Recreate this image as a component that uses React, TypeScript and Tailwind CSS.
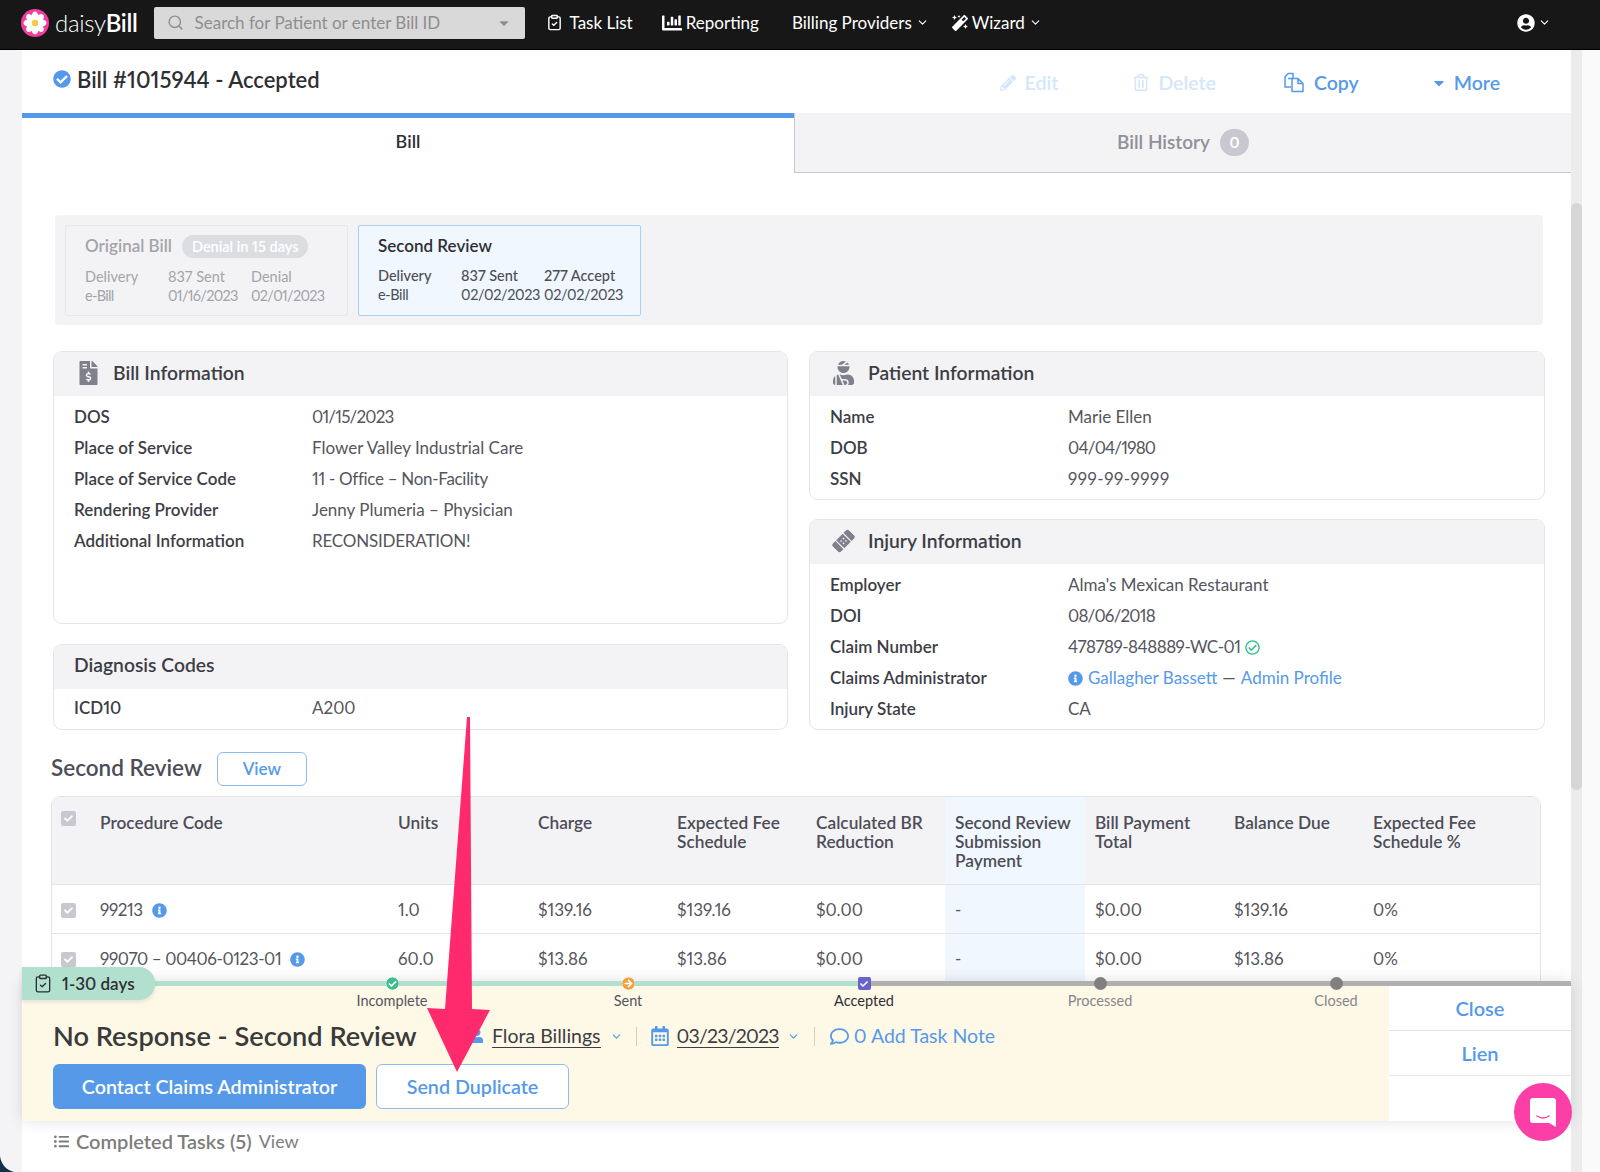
import { ChevronDown, ClipboardCheck, Search } from "lucide-react";
import {
  FaArrowCircleRight,
  FaBandAid,
  FaCaretDown,
  FaChartBar,
  FaCheck,
  FaCheckCircle,
  FaFileInvoiceDollar,
  FaInfoCircle,
  FaListUl,
  FaMagic,
  FaPencilAlt,
  FaRegCalendarAlt,
  FaRegCheckCircle,
  FaRegComment,
  FaRegTrashAlt,
  FaUser,
  FaUserCircle,
  FaUserInjured,
} from "react-icons/fa";

const gridCols = "grid grid-cols-[38px_298px_140px_139px_139px_139px_140px_139px_139px_177px]";
const tightDigits = "tracking-[-0.8px]";

const billRows = [
  ["DOS", "01/15/2023", tightDigits],
  ["Place of Service", "Flower Valley Industrial Care", ""],
  ["Place of Service Code", "11 - Office – Non-Facility", "tracking-[-0.3px]"],
  ["Rendering Provider", "Jenny Plumeria – Physician", ""],
  ["Additional Information", "RECONSIDERATION!", "tracking-[-0.2px]"],
];

const patientRows = [
  ["Name", "Marie Ellen", ""],
  ["DOB", "04/04/1980", tightDigits],
  ["SSN", "999-99-9999", "tracking-[0.5px]"],
];

function Logo() {
  const petals = [0, 45, 90, 135, 180, 225, 270, 315];
  return (
    <svg width="28" height="28" viewBox="0 0 28 28" className="shrink-0">
      <circle cx="14" cy="14" r="14" fill="#f23d9c" />
      {petals.map((a) => (
        <ellipse key={a} cx="14" cy="7.5" rx="3.4" ry="5" fill="#fff" transform={`rotate(${a} 14 14)`} />
      ))}
      <circle cx="14" cy="14" r="3.2" fill="#f7c948" />
    </svg>
  );
}

function CopyIcon() {
  return (
    <svg width="21" height="21" viewBox="0 0 21 21" fill="none" stroke="currentColor" strokeWidth="1.5" strokeLinejoin="round">
      <path d="M4 1.5h5l0 5h-0M9 1.5v5H4M4 1.5 1 5v10h6" />
      <path d="M8 6.5h6v5h5v8H8zM14 6.5l5 5" />
    </svg>
  );
}

function NavBar() {
  return (
    <div className="flex h-[50px] items-center border-b border-black bg-[#171717] pb-[4px] pl-[21px] text-[17px] text-white">
      <Logo />
      <span className="ml-[6px] text-[24px] font-light tracking-[-0.3px]">
        daisy<span className="font-semibold">Bill</span>
      </span>
      <div className="ml-[16px] flex h-[32px] w-[371px] shrink-0 items-center rounded-[2px] bg-[#d9d9d9] pl-[13px] pr-[14px] text-[#8e8e8e]">
        <Search className="h-[17px] w-[17px]" strokeWidth={2} />
        <span className="ml-[11px] flex-1 text-[17px]">Search for Patient or enter Bill ID</span>
        <FaCaretDown className="h-[14px] w-[14px]" />
      </div>
      <ClipboardCheck className="ml-[21px] h-[17px] w-[17px]" strokeWidth={2} />
      <span className="ml-[7px]">Task List</span>
      <FaChartBar className="ml-[29px] h-[20px] w-[20px]" />
      <span className="ml-[4px]">Reporting</span>
      <span className="ml-[33px]">Billing Providers</span>
      <ChevronDown className="ml-[4px] h-[13px] w-[13px]" />
      <FaMagic className="ml-[23px] h-[16px] w-[16px]" />
      <span className="ml-[4px]">Wizard</span>
      <ChevronDown className="ml-[4px] h-[13px] w-[13px]" />
      <div className="ml-auto mr-[49px] flex items-center">
        <FaUserCircle className="h-[18px] w-[18px]" />
        <ChevronDown className="ml-[3px] h-[13px] w-[13px]" />
      </div>
    </div>
  );
}

function ActionBar() {
  return (
    <div className="flex h-[63px] items-start">
      <FaCheckCircle className="ml-[31px] mt-[20px] h-[18px] w-[18px] text-[#5599ea]" />
      <h1 className="ml-[6px] mt-[13px] text-[22px] font-semibold text-[#2f2f33]">Bill #1015944 - Accepted</h1>
      <div className="ml-auto mt-[18px] flex items-center text-[19.5px] font-semibold text-[#5599ea]">
        <span className="flex items-center text-[#d5e6fb]">
          <FaPencilAlt className="h-[16px] w-[16px]" />
          <span className="ml-[9px]">Edit</span>
        </span>
        <span className="ml-[75px] flex items-center text-[#d5e6fb]">
          <FaRegTrashAlt className="h-[17px] w-[16px]" />
          <span className="ml-[9px]">Delete</span>
        </span>
        <span className="ml-[68px] flex items-center">
          <CopyIcon />
          <span className="ml-[9px]">Copy</span>
        </span>
        <span className="ml-[72px] mr-[71px] flex items-center">
          <FaCaretDown className="h-[16px] w-[16px]" />
          <span className="ml-[7px]">More</span>
        </span>
      </div>
    </div>
  );
}

function Tabs() {
  return (
    <div className="flex h-[60px] text-[19px]">
      <div className="flex w-[772px] items-center justify-center border-t-[5px] border-[#5599ea] pb-[9px] text-[18px] font-semibold text-[#2f2f33]">
        Bill
      </div>
      <div className="flex flex-1 items-center justify-center border-b border-l border-[#c8c9ce] bg-[#f3f3f5] font-semibold text-[#8f9099]">
        Bill History
        <span className="ml-[10px] flex h-[27px] w-[29px] items-center justify-center rounded-full bg-[#c8c9d0] text-[15px] font-bold text-white">
          0
        </span>
      </div>
    </div>
  );
}

function BillVersion({ title, badge, cols, active }: { title: string; badge?: string; cols: string[][]; active?: boolean }) {
  const box = active
    ? "border-[#a9d0f7] bg-[#f0f7fe] text-[#4d4d57]"
    : "border-[#e7e8ea] bg-[#f3f3f5] text-[#a3a4ab]";
  return (
    <div className={`h-[91px] w-[283px] rounded-[2px] border pl-[19px] pt-[8px] ${box}`}>
      <div className="flex h-[24px] items-center text-[17px] font-semibold">
        <span className={active ? "text-[#2f2f33]" : ""}>{title}</span>
        {badge && <span className="ml-[10px] rounded-full bg-[#dcdde1] px-[10px] text-[14.5px] leading-[23px] text-white">{badge}</span>}
      </div>
      <div className={`${active ? "mt-[8px]" : "mt-[9px]"} flex text-[14.5px] leading-[19px]`}>
        {cols.map((c) => (
          <div key={c[0]} className="w-[83px] whitespace-nowrap">
            <div className={active ? "font-medium" : ""}>{c[0]}</div>
            <div className={active ? "tracking-[-0.4px]" : "tracking-[-0.7px]"}>{c[1]}</div>
          </div>
        ))}
      </div>
    </div>
  );
}

function InfoCard({ icon, title, children, className = "", tight }: { icon?: React.ReactNode; title: string; children: React.ReactNode; className?: string; tight?: boolean }) {
  return (
    <div className={`overflow-hidden rounded-[9px] border border-[#e4e5e8] ${className}`}>
      <div className={`flex h-[44px] items-center bg-[#f3f3f5] pl-[20px] text-[19.3px] font-semibold text-[#3d3d45] ${tight ? "pb-[3px]" : "pb-[2px]"}`}>
        {icon}
        {title}
      </div>
      <div className={tight ? "pt-[3.5px]" : "pt-[5.5px]"}>{children}</div>
    </div>
  );
}

function InfoRow({ label, children }: { label: string; children: React.ReactNode }) {
  return (
    <div className="flex h-[31px] items-center pl-[20px] text-[17px] text-[#55555d]">
      <span className="w-[238px] font-semibold text-[#3d3d45]">{label}</span>
      <span className="flex items-center">{children}</span>
    </div>
  );
}

function Check() {
  return (
    <span className="flex h-[15px] w-[15px] items-center justify-center rounded-[2px] bg-[#c8c9d0]">
      <FaCheck className="h-[9px] w-[9px] text-white" />
    </span>
  );
}

function FeeTable() {
  const head = [
    "Procedure Code",
    "Units",
    "Charge",
    "Expected Fee Schedule",
    "Calculated BR Reduction",
    "Second Review Submission Payment",
    "Bill Payment Total",
    "Balance Due",
    "Expected Fee Schedule %",
  ];
  const rows = [
    { code: "99213", vals: ["1.0", "$139.16", "$139.16", "$0.00", "-", "$0.00", "$139.16", "0%"] },
    { code: "99070 – 00406-0123-01", vals: ["60.0", "$13.86", "$13.86", "$0.00", "-", "$0.00", "$13.86", "0%"] },
  ];
  return (
    <div className="ml-[29px] mt-[10px] w-[1490px] overflow-hidden rounded-t-[9px] border border-b-0 border-[#e4e5e8]">
      <div className={`${gridCols} h-[88px] border-b border-[#e4e5e8] bg-[#f3f3f5] text-[17.3px] font-semibold leading-[19px] text-[#4d4d57]`}>
        <div className="pl-[9px] pt-[14px]"><Check /></div>
        {head.map((h, i) => (
          <div key={h} className={`pl-[10px] pr-[6px] pt-[16px] ${i === 5 ? "bg-[#f0f7fe]" : ""}`}>{h}</div>
        ))}
      </div>
      {rows.map((r) => (
        <div key={r.code} className={`${gridCols} h-[49px] border-b border-[#e4e5e8] text-[17px] text-[#55555d]`}>
          <div className="flex items-center pl-[9px] pt-[2px]"><Check /></div>
          <div className="flex items-center pl-[10px] pt-[2px] tracking-[-0.4px]">
            {r.code}
            <FaInfoCircle className="ml-[9px] h-[15px] w-[15px] text-[#5599ea]" />
          </div>
          {r.vals.map((v, i) => (
            <div key={i} className={`flex items-center pl-[10px] pt-[2px] ${i === 4 ? "bg-[#f0f7fe]" : ""}`}>{v}</div>
          ))}
        </div>
      ))}
    </div>
  );
}

function Step({ label, tone, children }: { label: string; tone: string; children: React.ReactNode }) {
  return (
    <div className="flex w-[236px] shrink-0 flex-col items-center">
      {children}
      <span className={`mt-[3px] text-[14.5px] leading-[16px] ${tone}`}>{label}</span>
    </div>
  );
}

function TaskBar() {
  return (
    <div className="absolute left-[22px] top-[981px] w-[1549px] text-[#3d3d45]">
      <div className="relative shadow-[0_0_14px_rgba(0,0,0,0.12)]">
        <div className="flex h-[5px]">
          <div className="w-[842px] bg-[#b2e0cf]" />
          <div className="flex-1 bg-[#b0b0b0]" />
        </div>
        <div className="absolute left-0 top-[-14px] flex h-[33px] w-[133px] items-center rounded-r-[16px] bg-[#b1e0cf] pl-[11px] text-[17px] font-semibold text-[#2f2f33] shadow-[0_2px_4px_rgba(0,0,0,0.1)]">
          <ClipboardCheck className="h-[23px] w-[20px]" strokeWidth={1.6} />
          <span className="ml-[9px]">1-30 days</span>
        </div>
        <div className="flex h-[135px]">
          <div className="w-[1367px] bg-[#fef9e7] pl-[31px]">
            <div className="relative z-10 -mt-[9px] ml-[221px] flex">
              <Step label="Incomplete" tone="text-[#55555d]">
                <FaCheckCircle className="h-[13px] w-[13px] rounded-full bg-white text-[#3cc08f]" />
              </Step>
              <Step label="Sent" tone="text-[#55555d]">
                <FaArrowCircleRight className="h-[13px] w-[13px] rounded-full bg-white text-[#f5a03c]" />
              </Step>
              <Step label="Accepted" tone="text-[#2f2f33]">
                <span className="flex h-[13px] w-[13px] items-center justify-center rounded-[2px] bg-[#6a63c7]">
                  <FaCheck className="h-[8px] w-[8px] text-white" />
                </span>
              </Step>
              <Step label="Processed" tone="text-[#85858c]">
                <span className="h-[13px] w-[13px] rounded-full bg-[#808080]" />
              </Step>
              <Step label="Closed" tone="text-[#85858c]">
                <span className="h-[13px] w-[13px] rounded-full bg-[#808080]" />
              </Step>
            </div>
            <div className="mt-[11px] flex h-[32px] items-center">
              <span className="w-[417px] whitespace-nowrap text-[27.2px] font-semibold text-[#3a3a3a]">No Response - Second Review</span>
              <FaUser className="h-[14px] w-[14px] text-[#5599ea]" />
              <span className="ml-[8px] border-b border-[#3d3d45] text-[19.5px] leading-[22px]">Flora Billings</span>
              <ChevronDown className="ml-[9px] h-[13px] w-[13px] text-[#5599ea]" />
              <span className="ml-[13px] h-[19px] w-px bg-[#cfcfc6]" />
              <FaRegCalendarAlt className="ml-[14px] h-[20px] w-[18px] text-[#5599ea]" />
              <span className={`ml-[8px] border-b border-[#3d3d45] text-[19.5px] leading-[22px] ${tightDigits}`}>03/23/2023</span>
              <ChevronDown className="ml-[8px] h-[13px] w-[13px] text-[#5599ea]" />
              <span className="ml-[14px] h-[19px] w-px bg-[#cfcfc6]" />
              <FaRegComment className="ml-[15px] h-[19px] w-[19px] text-[#5599ea]" />
              <span className="ml-[5px] text-[19.5px] text-[#5599ea]">0 Add Task Note</span>
            </div>
            <div className="mt-[12px] flex text-[19.7px] font-semibold">
              <button className="h-[45px] w-[313px] rounded-[6px] bg-[#5599e8] text-white">Contact Claims Administrator</button>
              <button className="ml-[10px] h-[45px] w-[193px] rounded-[6px] border border-[#8dbcf0] bg-white text-[#5599ea]">Send Duplicate</button>
            </div>
          </div>
          <div className="flex-1 bg-white text-center text-[20px] font-semibold text-[#5599ea]">
            <div className="flex h-[45px] items-center justify-center border-b border-[#e4e5e8]">Close</div>
            <div className="flex h-[45px] items-center justify-center border-b border-[#e4e5e8]">Lien</div>
          </div>
        </div>
      </div>
      <div className="flex h-[51px] items-center bg-white pb-[11px] pl-[31px] text-[#7d7d7d]">
        <FaListUl className="h-[15px] w-[17px]" />
        <span className="ml-[6px] text-[20px] font-semibold">Completed Tasks (5)</span>
        <span className="ml-[7px] text-[18px]">View</span>
      </div>
    </div>
  );
}

export default function App() {
  return (
    <div className="relative h-[1172px] w-[1600px] overflow-hidden bg-[#f4f4f7] font-['Lato',sans-serif] proportional-nums">
      <NavBar />
      <div className="flex h-[1122px]">
        <div className="ml-[22px] w-[1549px] bg-white">
          <ActionBar />
          <Tabs />
          <div className="ml-[33px] mt-[42px] flex h-[110px] w-[1488px] gap-[10px] rounded-[4px] bg-[#f3f3f5] px-[10px] pt-[10px]">
            <BillVersion
              title="Original Bill"
              badge="Denial in 15 days"
              cols={[["Delivery", "e-Bill"], ["837 Sent", "01/16/2023"], ["Denial", "02/01/2023"]]}
            />
            <BillVersion
              active
              title="Second Review"
              cols={[["Delivery", "e-Bill"], ["837 Sent", "02/02/2023"], ["277 Accept", "02/02/2023"]]}
            />
          </div>
          <div className="ml-[31px] mt-[26px] flex w-[1492px] gap-[21px]">
            <div className="w-[735px]">
              <InfoCard
                title="Bill Information"
                className="h-[273px]"
                icon={<FaFileInvoiceDollar className="ml-[5px] mr-[15px] h-[24px] w-[19px] text-[#7f808c]" />}
              >
                {billRows.map(([k, v, cls]) => (
                  <InfoRow key={k} label={k}><span className={cls}>{v}</span></InfoRow>
                ))}
              </InfoCard>
              <InfoCard tight title="Diagnosis Codes" className="mt-[20px] h-[86px]">
                <InfoRow label="ICD10">A200</InfoRow>
              </InfoCard>
            </div>
            <div className="w-[736px]">
              <InfoCard
                title="Patient Information"
                className="h-[149px]"
                icon={<FaUserInjured className="ml-[2px] mr-[13px] h-[24px] w-[23px] text-[#7f808c]" />}
              >
                {patientRows.map(([k, v, cls]) => (
                  <InfoRow key={k} label={k}><span className={cls}>{v}</span></InfoRow>
                ))}
              </InfoCard>
              <InfoCard
                title="Injury Information"
                className="mt-[19px] h-[211px]"
                icon={<FaBandAid className="ml-[2px] mr-[13px] h-[24px] w-[23px] -rotate-45 text-[#7f808c]" />}
              >
                <InfoRow label="Employer">Alma's Mexican Restaurant</InfoRow>
                <InfoRow label="DOI"><span className={tightDigits}>08/06/2018</span></InfoRow>
                <InfoRow label="Claim Number">
                  <span className="tracking-[-0.5px]">478789-848889-WC-01</span>
                  <FaRegCheckCircle className="ml-[5px] h-[15px] w-[15px] text-[#3cc08f]" />
                </InfoRow>
                <InfoRow label="Claims Administrator">
                  <FaInfoCircle className="mr-[5px] h-[15px] w-[15px] text-[#5599ea]" />
                  <span className="text-[#5599ea]">Gallagher Bassett</span>
                  <span className="mx-[5px]">—</span>
                  <span className="text-[#5599ea]">Admin Profile</span>
                </InfoRow>
                <InfoRow label="Injury State">CA</InfoRow>
              </InfoCard>
            </div>
          </div>
          <div className="ml-[29px] mt-[22px] flex h-[34px] items-center">
            <h2 className="pb-[3px] text-[22.5px] font-semibold text-[#4d4d57]">Second Review</h2>
            <button className="ml-[15px] h-[34px] w-[90px] rounded-[6px] border border-[#8dbcf0] text-[17px] font-semibold text-[#5599ea]">View</button>
          </div>
          <FeeTable />
        </div>
        <div className="w-[11px] bg-[#ececed] pt-[153px]">
          <div className="h-[587px] rounded-full bg-[#d6d6d6]" />
        </div>
        <div className="flex-1 bg-[#fafafb]" />
      </div>
      <TaskBar />
      <svg className="absolute left-[420px] top-[715px] z-20" width="80" height="365" viewBox="0 0 80 365">
        <path d="M47 2 L50 2 L52 294 L70 295 L37 357 L7 293 L25 294 Z" fill="#ff2a6d" />
      </svg>
      <button className="absolute left-[1514px] top-[1083px] z-30 flex h-[58px] w-[58px] items-center justify-center rounded-full bg-[#fb3fa7]">
        <svg width="26" height="29" viewBox="0 0 26 29">
          <path d="M3 0h20a3 3 0 0 1 3 3v26l-7-4H3a3 3 0 0 1-3-3V3a3 3 0 0 1 3-3z" fill="#fff" />
          <path d="M7 18q6 4 12 0" fill="none" stroke="#fb3fa7" strokeWidth="1.5" strokeLinecap="round" />
        </svg>
      </button>
      <svg className="absolute bottom-0 left-0" width="14" height="16" viewBox="0 0 14 16">
        <path d="M0 0C1 8 6 14 14 16H0Z" fill="#12304a" />
      </svg>
    </div>
  );
}
